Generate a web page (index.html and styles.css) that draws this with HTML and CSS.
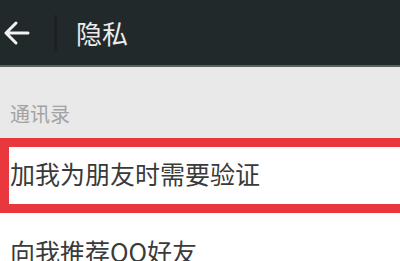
FILE: index.html
```html
<!DOCTYPE html>
<html lang="zh">
<head>
    <meta charset="UTF-8">
    <title>隐私</title>
    <link rel="stylesheet" href="styles.css">
</head>
<body>
    <div class="topbar">
        <div class="back">
            <svg width="28" height="26" viewBox="0 0 28 26">
                <path d="M26 13 H4 M14 3 L4 13 L14 23" fill="none" stroke="#f2f2f2" stroke-width="3" stroke-linecap="round" stroke-linejoin="round"/>
            </svg>
        </div>
        <div class="divider"></div>
        <div class="title">隐私</div>
    </div>
    <div class="section">通讯录</div>
    <div class="row highlight">加我为朋友时需要验证</div>
    <div class="row">向我推荐QQ好友</div>
</body>
</html>
```

FILE: styles.css
```css
body {
    margin: 0;
    background-color: #fff;
    font-family: "Noto Sans CJK SC", "Noto Sans", sans-serif;
    overflow: hidden;
}

.topbar {
    display: flex;
    align-items: center;
    height: 65px;
    background-color: #22292b;
    border-top: 2px solid #2a3133;
    border-bottom: 2px solid #5a605f;
    box-sizing: content-box;
    margin-top: -2px;
}

.back {
    width: 52px;
    padding-left: 2px;
    display: flex;
    align-items: center;
}

.divider {
    width: 3px;
    height: 36px;
    background-color: #1b2022;
}

.title {
    margin-left: 19px;
    color: #ececec;
    font-size: 26px;
    line-height: 1;
}

.section {
    height: 71px;
    background-color: #e9e9e9;
    color: #a3a3a3;
    font-size: 20px;
    padding-left: 10px;
    padding-top: 32px;
    box-sizing: border-box;
}

.row {
    font-size: 25px;
    color: #3a3a3a;
    padding-left: 10px;
    height: 75px;
    line-height: 1;
    display: flex;
    align-items: center;
    box-sizing: border-box;
}

.row.highlight {
    border: 9px solid #e8383d;
    border-right: none;
    padding-left: 1px;
    padding-bottom: 5px;
    margin-right: -10px;
}

.row + .row {
    align-items: flex-start;
    padding-top: 26px;
}
```
